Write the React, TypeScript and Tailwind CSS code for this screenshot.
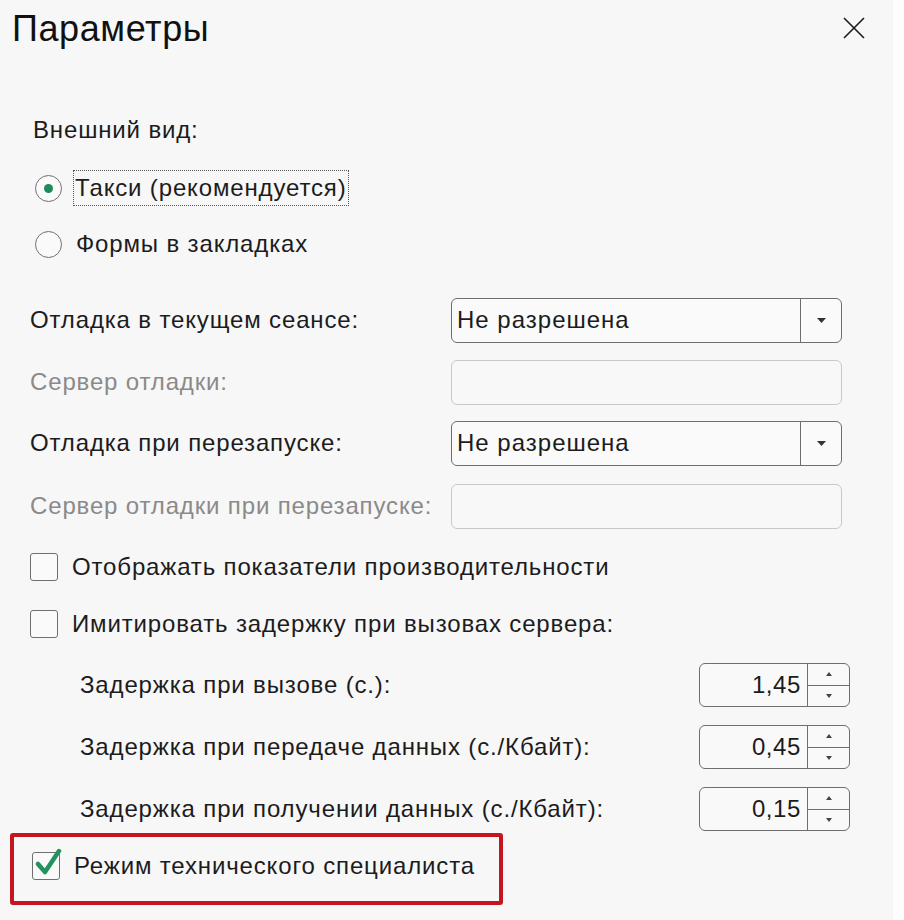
import * as React from "react";

const TEXT = "text-[24px] tracking-[0.85px] text-[#1c1c1c]";

function Radio({ checked }: { checked?: boolean }) {
  return (
    <span className="w-[27px] h-[27px] rounded-full border border-[#6f6f6f] bg-[#fafafa] flex items-center justify-center shrink-0">
      {checked && <span className="w-[9px] h-[9px] rounded-full bg-[#1f8a5b]" />}
    </span>
  );
}

function Checkbox({ checked }: { checked?: boolean }) {
  return (
    <span className="relative w-[28px] h-[28px] rounded-[3px] border border-[#6f6f6f] bg-[#fafafa] shrink-0">
      {checked && (
        <svg
          className="absolute left-[2px] top-[-6px]"
          width="28"
          height="30"
          viewBox="0 0 28 30"
        >
          <path
            d="M3 17 L10 25 L24 4"
            fill="none"
            stroke="#23925f"
            strokeWidth="4.5"
            strokeLinecap="round"
            strokeLinejoin="round"
          />
        </svg>
      )}
    </span>
  );
}

function Select({ value }: { value: string }) {
  return (
    <div className="w-[391px] h-[45px] rounded-[6px] border border-[#6e6e6e] bg-[#fafafa] flex">
      <div className="flex-1 flex items-center pl-[5px] text-[24px] tracking-[1px] text-[#1c1c1c]">{value}</div>
      <div className="w-[41px] border-l border-[#6e6e6e] flex items-center justify-center">
        <svg width="9" height="5" viewBox="0 0 9 5">
          <path d="M0 0 H9 L4.5 5 Z" fill="#333" />
        </svg>
      </div>
    </div>
  );
}

function Disabled() {
  return <div className="w-[391px] h-[45px] rounded-[6px] border border-[#c9c9c9] bg-[#f8f8f8]" />;
}

function Spinner({ value }: { value: string }) {
  return (
    <div className="w-[151px] h-[44px] rounded-[6px] border border-[#6e6e6e] bg-[#f9f9f9] flex">
      <div className="flex-1 flex items-center justify-end pr-[6px] text-[24px] tracking-[0.6px] text-[#1c1c1c]">
        {value}
      </div>
      <div className="w-[42px] border-l border-[#6e6e6e] flex flex-col">
        <div className="flex-1 flex items-center justify-center border-b border-[#6e6e6e]">
          <svg width="6" height="4" viewBox="0 0 6 4">
            <path d="M0 4 H6 L3 0 Z" fill="#444" />
          </svg>
        </div>
        <div className="flex-1 flex items-center justify-center">
          <svg width="6" height="4" viewBox="0 0 6 4">
            <path d="M0 0 H6 L3 4 Z" fill="#444" />
          </svg>
        </div>
      </div>
    </div>
  );
}

export default function App() {
  return (
    <div
      className="w-[904px] h-[920px] bg-[#fdfdfd] flex"
      style={{ fontFamily: '"Liberation Sans", Arial, sans-serif' }}
    >
      <div className="w-[893px] h-full bg-[#f7f7f7] flex flex-col">
        {/* Header */}
        <div className="h-[58px] flex items-center justify-between pl-[12px] pr-[28px]">
          <h1 className="text-[36px] tracking-[0.6px] text-[#111]">Параметры</h1>
          <svg width="22" height="22" viewBox="0 0 22 22" className="mt-[-2px]">
            <path d="M1 1 L21 21 M21 1 L1 21" stroke="#1a1a1a" strokeWidth="1.6" />
          </svg>
        </div>

        <div className="flex flex-col pl-[30px]">
          <div className={`mt-[50px] h-[44px] flex items-center pl-[3px] ${TEXT}`}>Внешний вид:</div>

          <div className="mt-[14px] h-[44px] flex items-center gap-[11px] pl-[5px]">
            <Radio checked />
            <span className={`border border-dotted border-[#555] px-[1px] h-[36px] flex items-center ${TEXT}`}>
              Такси (рекомендуется)
            </span>
          </div>
          <div className="mt-[12px] h-[44px] flex items-center gap-[14px] pl-[5px]">
            <Radio />
            <span className={TEXT}>Формы в закладках</span>
          </div>

          <div className="mt-[32px] h-[44px] flex items-center">
            <span className={`w-[421px] ${TEXT}`}>Отладка в текущем сеансе:</span>
            <Select value="Не разрешена" />
          </div>
          <div className="mt-[18px] h-[44px] flex items-center">
            <span className={`w-[421px] ${TEXT} text-[#8a8a8a]`}>Сервер отладки:</span>
            <Disabled />
          </div>
          <div className="mt-[17px] h-[44px] flex items-center">
            <span className={`w-[421px] ${TEXT}`}>Отладка при перезапуске:</span>
            <Select value="Не разрешена" />
          </div>
          <div className="mt-[19px] h-[44px] flex items-center">
            <span className={`w-[421px] ${TEXT} text-[#8a8a8a]`}>Сервер отладки при перезапуске:</span>
            <Disabled />
          </div>

          <div className="mt-[17px] h-[44px] flex items-center gap-[14px]">
            <Checkbox />
            <span className={TEXT}>Отображать показатели производительности</span>
          </div>
          <div className="mt-[13px] h-[44px] flex items-center gap-[14px]">
            <Checkbox />
            <span className={TEXT}>Имитировать задержку при вызовах сервера:</span>
          </div>

          {[
            ["Задержка при вызове (с.):", "1,45"],
            ["Задержка при передаче данных (с./Кбайт):", "0,45"],
            ["Задержка при получении данных (с./Кбайт):", "0,15"],
          ].map(([label, value], i) => (
            <div
              key={label}
              className={`${i === 0 ? "mt-[17px]" : "mt-[18px]"} h-[44px] flex items-center pl-[50px]`}
            >
              <span className={`w-[619px] ${TEXT}`}>{label}</span>
              <Spinner value={value} />
            </div>
          ))}
        </div>

        {/* Highlighted option */}
        <div className="mt-[2px] ml-[10px] w-[493px] h-[72px] border-[4px] border-[#c4161f] rounded-[3px] flex items-center gap-[14px] pl-[18px] pb-[6px]">
          <Checkbox checked />
          <span className={TEXT}>Режим технического специалиста</span>
        </div>
      </div>
    </div>
  );
}
